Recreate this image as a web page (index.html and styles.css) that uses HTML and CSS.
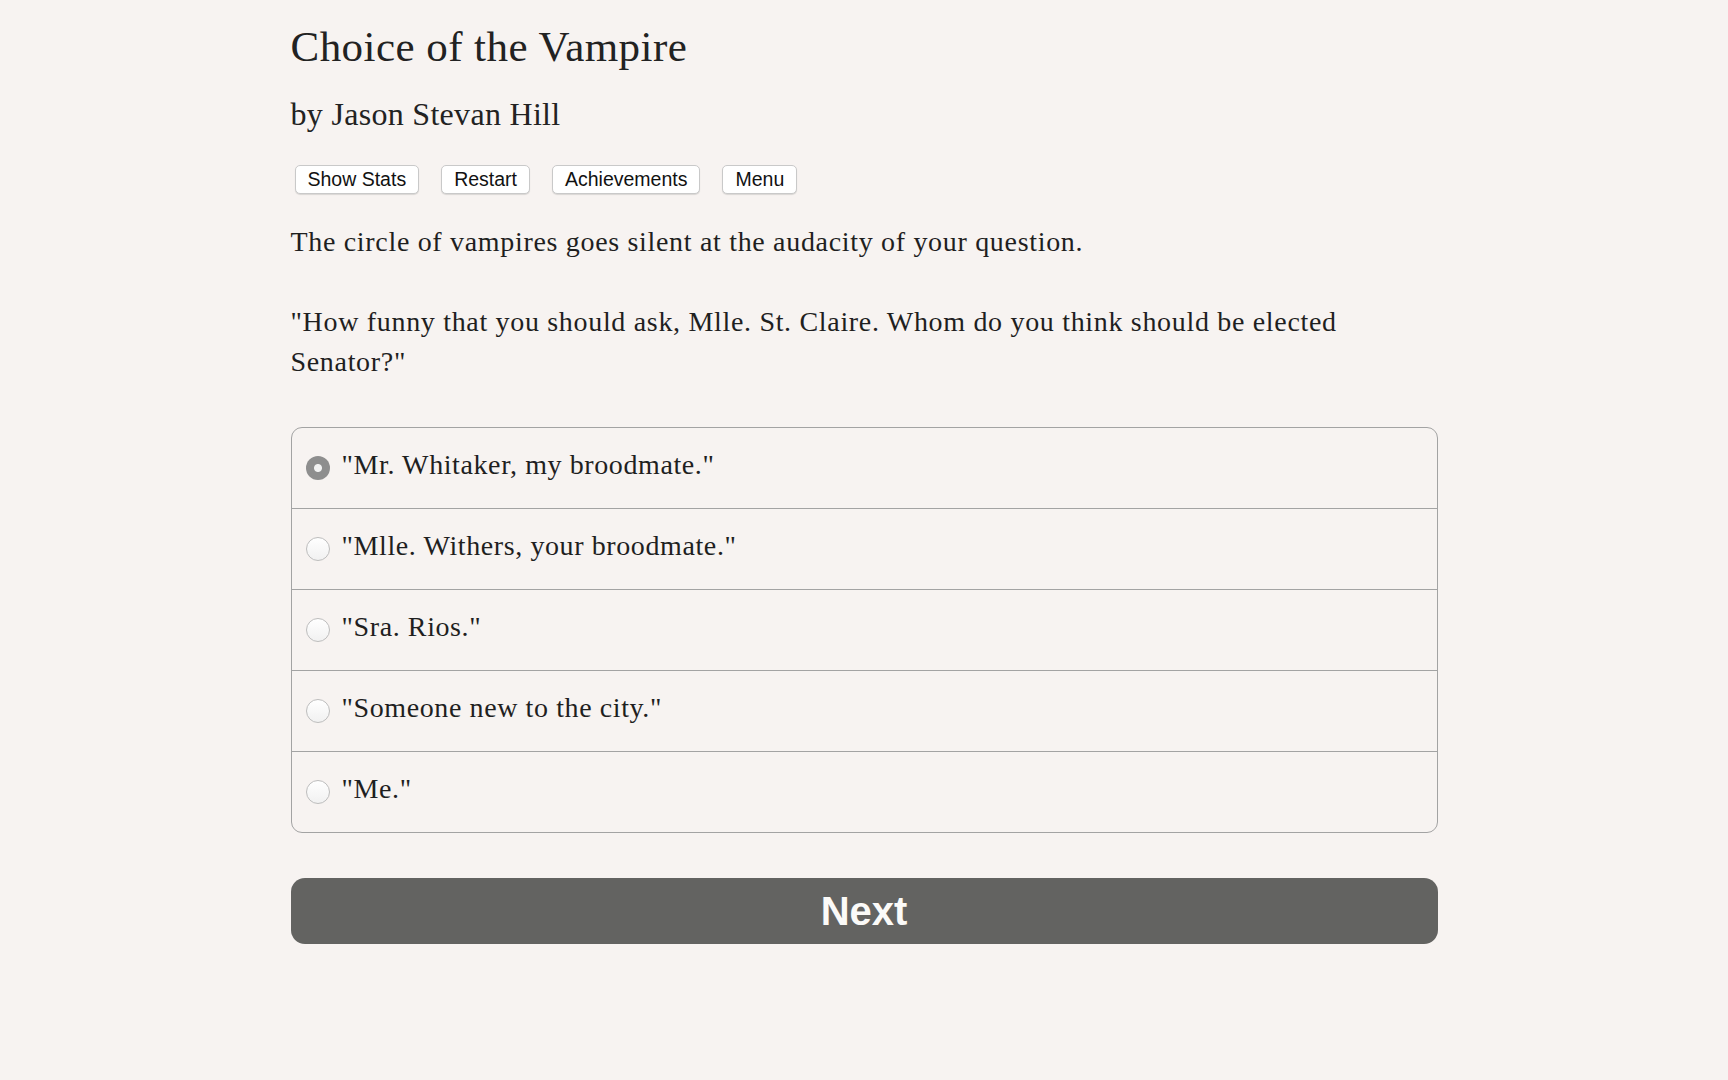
FILE: index.html
```html
<!DOCTYPE html>
<html lang="en">
<head>
<meta charset="utf-8">
<title>Choice of the Vampire</title>
<link rel="stylesheet" href="styles.css">
</head>
<body>
<main class="page">
  <h1 class="title">Choice of the Vampire</h1>
  <h2 class="byline">by Jason Stevan Hill</h2>
  <nav class="buttons">
    <button class="btn">Show Stats</button>
    <button class="btn">Restart</button>
    <button class="btn">Achievements</button>
    <button class="btn">Menu</button>
  </nav>
  <p class="text">The circle of vampires goes silent at the audacity of your question.</p>
  <p class="text">"How funny that you should ask, Mlle. St. Claire. Whom do you think should be elected Senator?"</p>
  <form class="choices">
    <label class="choice"><input type="radio" name="c" class="radio" checked><span>"Mr. Whitaker, my broodmate."</span></label>
    <label class="choice"><input type="radio" name="c" class="radio"><span>"Mlle. Withers, your broodmate."</span></label>
    <label class="choice"><input type="radio" name="c" class="radio"><span>"Sra. Rios."</span></label>
    <label class="choice"><input type="radio" name="c" class="radio"><span>"Someone new to the city."</span></label>
    <label class="choice"><input type="radio" name="c" class="radio"><span>"Me."</span></label>
  </form>
  <button class="next">Next</button>
</main>
</body>
</html>
```

FILE: styles.css
```css
html, body {
  margin: 0;
  padding: 0;
  background: #f7f3f1;
}

body {
  font-family: "Liberation Serif", "Times New Roman", serif;
  color: #1f1f1f;
}

.page {
  width: 1147px;
  margin: 0 auto;
  padding-top: 21px;
  display: flex;
  flex-direction: column;
  align-items: stretch;
}

.title {
  margin: 0;
  font-size: 43px;
  line-height: 52px;
  font-weight: normal;
  letter-spacing: 0.45px;
  color: #222;
}

.byline {
  margin: 21px 0 0;
  font-size: 32px;
  line-height: 40px;
  font-weight: normal;
  letter-spacing: 0.3px;
  color: #222;
}

.buttons {
  display: flex;
  gap: 22px;
  margin: 31px 0 0 4px;
}

.btn {
  height: 29px;
  padding: 0 12px;
  border: 1px solid #c9c9c9;
  border-radius: 5px;
  background: #fff;
  box-shadow: 0 1px 1px rgba(0, 0, 0, 0.12);
  font-family: "Liberation Sans", Arial, sans-serif;
  font-size: 19.5px;
  line-height: 27px;
  color: #111;
}

.text {
  margin: 28px 0 0;
  font-size: 28px;
  line-height: 40px;
  letter-spacing: 0.68px;
}

.text + .text {
  margin-top: 40px;
}

.choices {
  margin: 45px 0 0;
  border: 1px solid #a3a3a3;
  border-radius: 11px;
  display: flex;
  flex-direction: column;
  overflow: hidden;
}

.choice {
  display: flex;
  align-items: center;
  height: 80px;
  padding-left: 14px;
  gap: 12px;
  font-size: 28px;
  line-height: 40px;
  letter-spacing: 0.6px;
}

.choice span {
  position: relative;
  top: -3px;
}

.choice + .choice {
  border-top: 1px solid #a3a3a3;
}

.radio {
  appearance: none;
  -webkit-appearance: none;
  margin: 0;
  width: 24px;
  height: 24px;
  flex: none;
  border-radius: 50%;
  border: 1px solid #bdbdbd;
  background: linear-gradient(#ffffff, #f1f1f1);
  box-sizing: border-box;
  position: relative;
}

.radio:checked {
  border: none;
  background: radial-gradient(circle, #f2f2f2 0 3.5px, #8e8e8e 4.5px);
}

.next {
  margin: 45px 0 0;
  height: 66px;
  border: none;
  border-radius: 14px;
  background: #636361;
  color: #fbfaf8;
  font-family: "Liberation Sans", Arial, sans-serif;
  font-weight: bold;
  font-size: 40px;
  line-height: 66px;
  padding: 0;
}
```
